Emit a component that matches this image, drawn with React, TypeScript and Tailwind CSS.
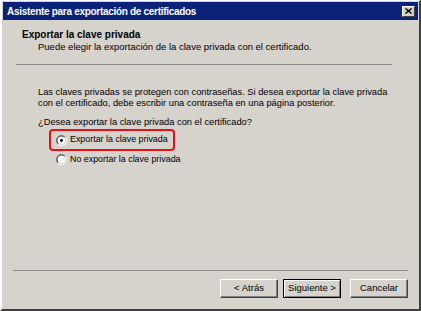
import React from "react";

const font = { fontFamily: '"Liberation Sans", Arial, sans-serif' };

function Radio({ checked }: { checked?: boolean }) {
  return (
    <svg width="11" height="11" viewBox="0 0 12 12" className="shrink-0">
      <path d="M10 2 A5.5 5.5 0 0 0 2 10" fill="none" stroke="#808080" strokeWidth="1" />
      <path d="M9.4 2.6 A4.5 4.5 0 0 0 2.6 9.4" fill="none" stroke="#404040" strokeWidth="1" />
      <path d="M2 10 A5.5 5.5 0 0 0 10 2" fill="none" stroke="#ffffff" strokeWidth="1" />
      <circle cx="6" cy="6" r="4" fill="#ffffff" />
      {checked && <circle cx="6" cy="6" r="1.6" fill="#000000" />}
    </svg>
  );
}

function Btn({ label, def }: { label: string; def?: boolean }) {
  return (
    <div
      className={
        "w-[58px] h-[19px] flex items-center justify-center text-[9.5px] text-black " +
        (def
          ? "border border-black shadow-[inset_1px_1px_0_#fff,inset_-1px_-1px_0_#808080]"
          : "border-t border-l border-white border-r border-b border-r-[#404040] border-b-[#404040] shadow-[inset_-1px_-1px_0_#808080]")
      }
    >
      {label}
    </div>
  );
}

export default function App() {
  return (
    <div
      style={font}
      className="w-[421px] h-[311px] bg-[#d6d2cc] border-l-2 border-t border-white border-r-2 border-r-[#404040] border-b-2 border-b-[#404040] flex flex-col overflow-hidden"
    >
      <div className="h-[18px] mx-[1px] mt-[1px] bg-[#0a2278] flex items-center justify-between pl-[4px] pr-[3px]">
        <span className="text-white font-bold text-[10px] tracking-[-0.3px]">
          Asistente para exportación de certificados
        </span>
        <div className="w-[13px] h-[11px] bg-[#d4d0c8] border-t border-l border-white border-r border-b border-r-[#404040] border-b-[#404040] flex items-center justify-center">
          <svg width="7" height="6" viewBox="0 0 7 6">
            <path d="M0.5 0.5 L6.5 5.5 M6.5 0.5 L0.5 5.5" stroke="#000" strokeWidth="1.4" />
          </svg>
        </div>
      </div>

      <div className="pl-[20px] pt-[9px]">
        <div className="font-bold text-[10px] leading-[12px] text-black">Exportar la clave privada</div>
        <div className="pl-[16px] text-[9.5px] leading-[11px] text-black">
          Puede elegir la exportación de la clave privada con el certificado.
        </div>
      </div>
      <div className="ml-[14px] w-[376px] h-[1px] bg-[#8c8c8c] mt-[12px]" />

      <div className="pl-[36px] pt-[22px] text-[9.3px] text-black">
        <div className="leading-[10.5px]">
          Las claves privadas se protegen con contraseñas. Si desea exportar la clave privada
          <br />
          con el certificado, debe escribir una contraseña en una página posterior.
        </div>
        <div className="mt-[9px] leading-[11px]">¿Desea exportar la clave privada con el certificado?</div>
        <div className="mt-[1px] ml-[11px] w-[126px] h-[22px] border-[2.5px] border-[#e8101c] rounded-[4px] flex items-center pl-[5px] gap-[3px] whitespace-nowrap text-[8.9px]">
          <Radio checked />
          <span>Exportar la clave privada</span>
        </div>
        <div className="mt-[2px] ml-[18px] flex items-center gap-[3px] whitespace-nowrap text-[8.9px]">
          <Radio />
          <span>No exportar la clave privada</span>
        </div>
      </div>

      <div className="flex-1" />
      <div className="ml-[11px] w-[395px] h-[1px] bg-[#8c8c8c]" />
      <div className="flex justify-end pr-[11px] pt-[8px] pb-[11px]">
        <Btn label="< Atrás" />
        <div className="ml-[5px]">
          <Btn label="Siguiente >" def />
        </div>
        <div className="ml-[9px]">
          <Btn label="Cancelar" />
        </div>
      </div>
    </div>
  );
}
